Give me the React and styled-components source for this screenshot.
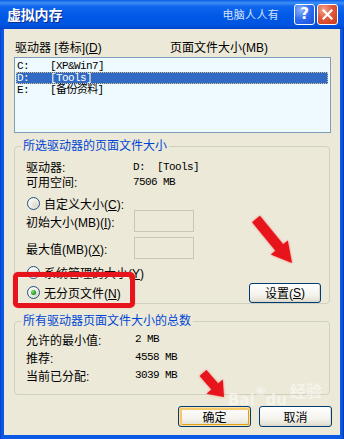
import React from 'react';
import styled, { createGlobalStyle } from 'styled-components';

const UI = `"Liberation Sans", "Noto Sans CJK SC", sans-serif`;
const MONO = `"Liberation Mono", "Noto Sans CJK SC", monospace`;

const drives = [
  { letter: 'C:', label: '[XP&Win7]' },
  { letter: 'D:', label: '[Tools]', selected: true },
  { letter: 'E:', label: '[备份资料]' },
];

const totals = [
  { label: '允许的最小值:', value: '2 MB' },
  { label: '推荐:', value: '4558 MB' },
  { label: '当前已分配:', value: '3039 MB' },
];

export default function App() {
  return (
    <>
      <GlobalStyle />
      <Window>
        <TitleBar>
          <Title>虚拟内存</Title>
          <Brand>电脑人人有</Brand>
          <CapButton $kind="help">?</CapButton>
          <CapButton $kind="close">
            <svg width="11" height="11" viewBox="0 0 11 11">
              <path d="M1.5 1.5 L9.5 9.5 M9.5 1.5 L1.5 9.5" stroke="#fff" strokeWidth="2.2" strokeLinecap="square" />
            </svg>
          </CapButton>
        </TitleBar>

        <Body>
          <Header>
            <span>驱动器 [卷标](<Key>D</Key>)</span>
            <span>页面文件大小(MB)</span>
          </Header>
          <ListBox>
            {drives.map((d) => (
              <ListRow key={d.letter} $selected={d.selected}>
                <Letter>{d.letter}</Letter>
                <span>{d.label}</span>
              </ListRow>
            ))}
          </ListBox>

          <Group>
            <Legend>所选驱动器的页面文件大小</Legend>
            <InfoRow>
              <span>驱动器:</span>
              <Mono>D:  [Tools]</Mono>
            </InfoRow>
            <InfoRow>
              <span>可用空间:</span>
              <Mono>7506 MB</Mono>
            </InfoRow>
            <RadioRow $top={8}>
              <Radio />
              <span>自定义大小(<Key>C</Key>):</span>
            </RadioRow>
            <FieldRow $top={0}>
              <span>初始大小(MB)(<Key>I</Key>):</span>
              <TextBox />
            </FieldRow>
            <FieldRow $top={5}>
              <span>最大值(MB)(<Key>X</Key>):</span>
              <TextBox />
            </FieldRow>
            <RadioRow $top={6}>
              <Radio />
              <span>系统管理的大小(<Key>Y</Key>)</span>
            </RadioRow>
            <LastRow>
              <RadioRow $top={0}>
                <Radio $checked />
                <span>无分页文件(<Key>N</Key>)</span>
              </RadioRow>
              <XPButton $w={72} $h={20}>设置(<Key>S</Key>)</XPButton>
            </LastRow>
          </Group>

          <Group $top={10} $bottom={10} $pt={2}>
            <Legend>所有驱动器页面文件大小的总数</Legend>
            {totals.map((t) => (
              <InfoRow key={t.label} $h={18} $col={109}>
                <span>{t.label}</span>
                <Mono>{t.value}</Mono>
              </InfoRow>
            ))}
          </Group>

          <Footer>
            <XPButton $w={73} $h={21} $default>确定</XPButton>
            <XPButton $w={73} $h={21}>取消</XPButton>
          </Footer>
        </Body>

        <Watermark>Bai<Paw>❀</Paw>du<small>经验</small></Watermark>
        <RedBox />
        <Arrows width="344" height="439" viewBox="0 0 344 439">
          <polygon points="259.9,215.8 283.2,244.3 287.8,240.5 292,263 270.8,254.5 275.4,250.7 252.1,222.2" />
          <polygon points="206.4,370 218.2,383.5 222.8,379.4 224,397 206.6,393.8 211.4,389.5 199.6,376" />
        </Arrows>
      </Window>
    </>
  );
}

const GlobalStyle = createGlobalStyle`
  html, body {
    margin: 0;
    padding: 0;
    background: #fff;
  }
  body {
    width: 344px;
    height: 439px;
    overflow: hidden;
    font-family: ${UI};
    font-size: 12px;
    color: #000;
  }
`;

const Window = styled.div`
  position: relative;
  width: 344px;
  height: 439px;
  display: flex;
  flex-direction: column;
  background: linear-gradient(90deg, #0840c8 0px, #0a5ae6 2px, #0a5ae6 342px, #0533a8 344px);
  box-sizing: border-box;
`;

const TitleBar = styled.div`
  height: 29px;
  flex: none;
  display: flex;
  align-items: center;
  padding: 0 6px 1px 7px;
  box-sizing: border-box;
  background: linear-gradient(
    #0a5fe6 0%,
    #3d8ef7 10%,
    #1067ee 22%,
    #0058e6 55%,
    #0055e0 85%,
    #0046cc 100%
  );
`;

const Title = styled.div`
  font-family: ${UI};
  font-weight: bold;
  font-size: 14px;
  letter-spacing: -0.2px;
  color: #fff;
  text-shadow: 1px 1px 0 #0b2a8a;
`;

const Brand = styled.div`
  margin-left: auto;
  margin-right: 13px;
  font-size: 11px;
  color: #d6e3fb;
  letter-spacing: 0.3px;
`;

const CapButton = styled.div`
  width: 21px;
  height: 21px;
  margin-left: 2px;
  box-sizing: border-box;
  border: 1px solid #fff;
  border-radius: 3px;
  display: flex;
  align-items: center;
  justify-content: center;
  color: #fff;
  font-family: "DejaVu Sans", sans-serif;
  font-weight: bold;
  font-size: 15px;
  background: ${(p) =>
    p.$kind === 'close'
      ? 'radial-gradient(circle at 30% 25%, #f0a68c 0%, #e2583a 45%, #c83a1c 100%)'
      : 'radial-gradient(circle at 30% 25%, #8fb4fb 0%, #2e6bef 50%, #1a4fd6 100%)'};
`;

const Body = styled.div`
  flex: 1;
  margin: 0 4px 4px 4px;
  background: #ece9d8;
  padding: 12px 8px 0 10px;
  display: flex;
  flex-direction: column;
`;

const Header = styled.div`
  display: grid;
  grid-template-columns: 155px 1fr;
  padding-left: 1px;
  height: 14px;
  line-height: 14px;
`;

const Key = styled.span`
  text-decoration: underline;
  text-underline-offset: 1px;
`;

const ListBox = styled.div`
  margin: 2px 1px 0 0;
  height: 76px;
  border: 1px solid #7f9db9;
  background: #eefafe;
  padding: 2px 2px 0 1px;
  box-sizing: border-box;
`;

const ListRow = styled.div`
  height: 12px;
  display: flex;
  align-items: center;
  padding-left: 1px;
  font-family: ${MONO};
  font-size: 11px;
  letter-spacing: -0.6px;
  line-height: 12px;
  color: ${(p) => (p.$selected ? '#fff' : '#000')};
  background: ${(p) => (p.$selected ? '#316ac5' : 'transparent')};
  outline: ${(p) => (p.$selected ? '1px dotted #d9c58b' : 'none')};
  outline-offset: -1px;
  white-space: pre;
`;

const Letter = styled.span`
  width: 33px;
`;

const Mono = styled.span`
  font-family: ${MONO};
  font-size: 11px;
  letter-spacing: -0.6px;
  white-space: pre;
`;

const Group = styled.fieldset`
  margin: ${(p) => p.$top ?? 6}px 2px 0 0;
  border: 1px solid #d0d0bf;
  border-radius: 4px;
  padding: ${(p) => p.$pt ?? 5}px 8px ${(p) => p.$bottom ?? 0}px 11px;
  min-width: 0;
`;

const Legend = styled.legend`
  color: #0046d5;
  padding: 0 2px;
  margin-left: -5px;
  line-height: 14px;
  font-size: 12px;
`;

const InfoRow = styled.div`
  display: grid;
  grid-template-columns: ${(p) => p.$col ?? 107}px 1fr;
  align-items: center;
  height: ${(p) => p.$h ?? 15}px;
`;

const RadioRow = styled.div`
  margin-top: ${(p) => p.$top}px;
  height: 14px;
  display: flex;
  align-items: center;
  gap: 4px;
  padding-left: 1px;
`;

const Radio = styled.span`
  width: 13px;
  height: 13px;
  flex: none;
  box-sizing: border-box;
  border-radius: 50%;
  border: 1px solid #1c5180;
  background: radial-gradient(circle at 70% 70%, #dcd8cb 0%, #f4f3ee 60%, #fff 100%);
  display: flex;
  align-items: center;
  justify-content: center;
  &::after {
    content: '';
    display: ${(p) => (p.$checked ? 'block' : 'none')};
    width: 5px;
    height: 5px;
    border-radius: 50%;
    background: radial-gradient(circle at 35% 35%, #7de37d 0%, #21a121 60%, #1a7d1a 100%);
  }
`;

const FieldRow = styled.div`
  margin-top: ${(p) => p.$top}px;
  display: grid;
  grid-template-columns: 108px 60px;
  align-items: center;
  height: 22px;
`;

const TextBox = styled.div`
  height: 22px;
  box-sizing: border-box;
  border: 1px solid #c9c7ba;
  background: #ece9d8;
`;

const LastRow = styled.div`
  margin-top: 3px;
  height: 21px;
  display: flex;
  align-items: center;
  justify-content: space-between;
`;

const XPButton = styled.div`
  width: ${(p) => p.$w}px;
  height: ${(p) => p.$h}px;
  box-sizing: border-box;
  border: 1px solid #003c74;
  border-radius: 3px;
  display: flex;
  align-items: center;
  justify-content: center;
  font-size: 12px;
  background: linear-gradient(#ffffff 0%, #f4f3ee 60%, #e6e3d6 90%, #d6d0c5 100%);
  box-shadow: ${(p) =>
    p.$default
      ? 'inset 0 0 0 1px #fbe0a8, inset 1px 1px 0 2px #f6c86a, inset -1px -1px 0 1px #e5a01a'
      : 'inset -1px -1px 0 #dcd9ce'};
`;

const Footer = styled.div`
  margin-top: 11px;
  display: flex;
  justify-content: flex-end;
  gap: 8px;
`;

const RedBox = styled.div`
  position: absolute;
  left: 13px;
  top: 272px;
  width: 122px;
  height: 36px;
  box-sizing: border-box;
  border: 5px solid #e8141b;
  border-radius: 5px;
  box-shadow: 0 0 1px #f06060, inset 0 0 2px rgba(255, 255, 255, 0.8);
`;

const Arrows = styled.svg`
  position: absolute;
  left: 0;
  top: 0;
  pointer-events: none;
  fill: #e8141b;
  filter: drop-shadow(0 0 1px rgba(240, 60, 60, 0.7));
`;

const Watermark = styled.div`
  position: absolute;
  left: 228px;
  top: 386px;
  font-family: "DejaVu Sans", "Noto Sans CJK SC", sans-serif;
  font-weight: bold;
  font-size: 15px;
  color: rgba(255, 255, 255, 0.5);
  pointer-events: none;
  small {
    font-size: 16px;
    margin-left: 3px;
    position: relative;
    top: -8px;
  }
`;

const Paw = styled.span`
  font-size: 13px;
  position: relative;
  top: -10px;
`;
